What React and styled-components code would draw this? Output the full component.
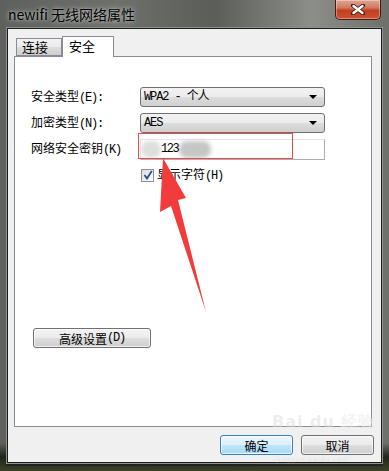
import styled, { createGlobalStyle } from "styled-components";

const Global = createGlobalStyle`
  html, body { margin: 0; padding: 0; }
  body {
    width: 389px;
    height: 471px;
    overflow: hidden;
    font-family: "Noto Sans CJK SC", "DejaVu Sans", sans-serif;
    font-size: 12px;
    color: #000;
  }
`;

const Frame = styled.div`
  width: 389px;
  height: 471px;
  display: flex;
  flex-direction: column;
  box-sizing: border-box;
  background:
    linear-gradient(180deg, rgba(0,0,0,0) 0%, rgba(0,0,0,0) 94%, rgba(20,24,16,0.85) 97%, #3c4226 100%),
    linear-gradient(90deg, #5d605c 0%, #6d706b 30%, #5a5d58 55%, #8c8e8a 80%, #6c6f6a 100%);
  position: relative;
`;

const TitleBar = styled.div`
  height: 28px;
  display: flex;
  align-items: flex-start;
  justify-content: space-between;
  padding: 0 8px 0 8px;
  box-sizing: border-box;
`;

const Title = styled.div`
  font-size: 14px;
  line-height: 15px;
  margin-top: 7px;
  color: #000;
  text-shadow: 0 0 6px rgba(255,255,255,0.55), 0 0 3px rgba(255,255,255,0.5);
`;

const CloseBtn = styled.div`
  width: 46px;
  height: 20px;
  box-sizing: border-box;
  border: 1px solid #4a1a12;
  border-top: none;
  border-radius: 0 0 5px 5px;
  background: linear-gradient(180deg, #e0a392 0%, #d27a63 40%, #c0401f 55%, #cc5232 100%);
  box-shadow: inset 0 0 0 1px rgba(255,255,255,0.35);
  display: flex;
  align-items: center;
  justify-content: center;
`;

const Client = styled.div`
  flex: 1;
  margin: 0 7px 8px 7px;
  background: #f0f0f0;
  border: 1px solid #1c1c1c;
  box-shadow: 0 0 0 1px #8e928c, 0 2px 0 1px #222;
  display: flex;
  flex-direction: column;
  padding: 7px 9px 7px 6px;
  box-sizing: border-box;
`;

const Tabs = styled.div`
  display: flex;
  align-items: flex-end;
  height: 20px;
  padding-left: 2px;
  position: relative;
  z-index: 1;
`;

const Tab = styled.div`
  box-sizing: border-box;
  height: ${(p) => (p.$active ? "21px" : "18px")};
  width: ${(p) => (p.$active ? "52px" : "46px")};
  padding: ${(p) => (p.$active ? "0 6px" : "0 5px")};
  border: 1px solid #898c95;
  border-bottom: ${(p) => (p.$active ? "none" : "1px solid #898c95")};
  margin-bottom: ${(p) => (p.$active ? "-1px" : "0")};
  background: ${(p) =>
    p.$active ? "#fff" : "linear-gradient(180deg, #f2f2f2 0%, #ebebeb 50%, #dddddd 51%, #cfcfcf 100%)"};
  font-size: 13px;
  line-height: ${(p) => (p.$active ? "18px" : "16px")};
`;

const Panel = styled.div`
  flex: 1;
  background: #fff;
  border: 1px solid #898c95;
  position: relative;
  display: flex;
  flex-direction: column;
  padding: 30px 0 0 16px;
  box-sizing: border-box;
`;

const FormGrid = styled.div`
  display: grid;
  grid-template-columns: 109px 185px;
  grid-auto-rows: 20px;
  row-gap: 6px;
  align-items: center;
`;

const Label = styled.div`
  font-size: 12px;
  line-height: 14px;
  white-space: nowrap;
`;

const Mnemonic = styled.span`
  font-family: "Liberation Mono", monospace;
  font-size: 12px;
  letter-spacing: -1.2px;
`;

const Select = styled.div`
  height: 20px;
  box-sizing: border-box;
  border: 1px solid #707070;
  border-radius: 3px;
  background: linear-gradient(180deg, #f2f2f2 0%, #ebebeb 50%, #dddddd 51%, #cfcfcf 100%);
  display: flex;
  align-items: center;
  justify-content: space-between;
  padding: 0 7px 0 3px;
`;

const SelectText = styled.span`
  font-family: "Liberation Mono", "Noto Sans CJK SC", monospace;
  font-size: 12px;
  letter-spacing: -1.1px;
  line-height: 14px;
`;

const Caret = styled.span`
  width: 0;
  height: 0;
  border-left: 4px solid transparent;
  border-right: 4px solid transparent;
  border-top: 4px solid #000;
`;

const TextBox = styled.div`
  height: 21px;
  box-sizing: border-box;
  border: 1px solid #abadb3;
  border-top-color: #e2e3ea;
  border-left-color: #e2e3ea;
  background: #fff;
  position: relative;
  display: flex;
  align-items: center;
  padding-left: 20px;
`;

const KeyText = styled.span`
  font-family: "Liberation Mono", monospace;
  font-size: 12px;
  letter-spacing: -1.4px;
  position: relative;
  z-index: 1;
`;

const Smudge = styled.div`
  position: absolute;
  top: 1px;
  height: 17px;
  border-radius: 8px;
  background: #c9c9c9;
  filter: blur(2px);
`;

const CheckRow = styled.div`
  grid-column: 2;
  display: flex;
  align-items: center;
  gap: 3px;
  padding-left: 1px;
`;

const Check = styled.div`
  width: 13px;
  height: 13px;
  box-sizing: border-box;
  border: 1px solid #8f8f8f;
  background: linear-gradient(135deg, #dcdcdc, #fdfdfd);
  display: flex;
  align-items: center;
  justify-content: center;
`;

const Button = styled.div`
  box-sizing: border-box;
  width: ${(p) => p.$w}px;
  height: 20px;
  border: 1px solid ${(p) => (p.$default ? "#3c7fb1" : "#707070")};
  border-radius: 3px;
  background: ${(p) =>
    p.$default
      ? "linear-gradient(180deg, #eaf6fd 0%, #d9f0fc 50%, #bee6fd 51%, #a7d9f5 100%)"
      : "linear-gradient(180deg, #f2f2f2 0%, #ebebeb 50%, #dddddd 51%, #cfcfcf 100%)"};
  box-shadow: inset 0 0 0 1px rgba(255, 255, 255, 0.7);
  display: flex;
  align-items: center;
  justify-content: center;
  font-size: 12px;
`;

const AdvancedWrap = styled.div`
  margin-top: auto;
  margin-bottom: 78px;
  padding-left: 2px;
`;

const Footer = styled.div`
  display: flex;
  justify-content: flex-end;
  gap: 8px;
  padding-top: 8px;
  margin-right: -2px;
`;

const Highlight = styled.div`
  position: absolute;
  left: 123px;
  top: 76px;
  width: 155px;
  height: 26px;
  box-sizing: border-box;
  border: 1px solid #f0474a;
  pointer-events: none;
  z-index: 2;
`;

const Arrow = styled.svg`
  position: absolute;
  left: 0;
  top: 0;
  z-index: 3;
  pointer-events: none;
`;

const Watermark = styled.div`
  position: absolute;
  left: 272px;
  top: 414px;
  color: rgba(200, 200, 200, 0.35);
  font-family: "DejaVu Sans", sans-serif;
  pointer-events: none;
  z-index: 4;
  line-height: 1;
`;

const WmBig = styled.div`
  font-size: 16px;
  font-weight: bold;
  letter-spacing: 1px;
  -webkit-text-stroke: 0.5px rgba(255, 255, 255, 0.4);
`;

const WmSmall = styled.div`
  font-size: 7px;
  margin-top: 27px;
  margin-left: 4px;
  letter-spacing: 0.5px;
`;

export default function App() {
  return (
    <>
      <Global />
      <Frame>
        <TitleBar>
          <Title>newifi 无线网络属性</Title>
          <CloseBtn>
            <svg width="14" height="11" viewBox="0 0 14 11">
              <path d="M2 1.5 L12 9.5 M12 1.5 L2 9.5" stroke="#3a1c14" strokeWidth="4" strokeLinecap="round" />
              <path d="M2.5 2 L11.5 9 M11.5 2 L2.5 9" stroke="#fff" strokeWidth="2.4" strokeLinecap="round" />
            </svg>
          </CloseBtn>
        </TitleBar>
        <Client>
          <Tabs>
            <Tab>连接</Tab>
            <Tab $active>安全</Tab>
          </Tabs>
          <Panel>
            <FormGrid>
              <Label>安全类型<Mnemonic>(E):</Mnemonic></Label>
              <Select>
                <SelectText>WPA2 - 个人</SelectText>
                <Caret />
              </Select>
              <Label>加密类型<Mnemonic>(N):</Mnemonic></Label>
              <Select>
                <SelectText>AES</SelectText>
                <Caret />
              </Select>
              <Label>网络安全密钥<Mnemonic>(K)</Mnemonic></Label>
              <TextBox>
                <Smudge style={{ left: 0, width: 20, background: "#dedede" }} />
                <Smudge style={{ left: 38, width: 32, background: "#c6c6c6" }} />
                <KeyText>123</KeyText>
              </TextBox>
              <CheckRow>
                <Check>
                  <svg width="10" height="10" viewBox="0 0 10 10">
                    <path d="M1.5 5 L4 8.5 L8.8 1" fill="none" stroke="#2c4a9a" strokeWidth="1.8" />
                  </svg>
                </Check>
                <Label>显示字符<Mnemonic>(H)</Mnemonic></Label>
              </CheckRow>
            </FormGrid>
            <AdvancedWrap>
              <Button $w={118}>高级设置<Mnemonic>(D)</Mnemonic></Button>
            </AdvancedWrap>
            <Highlight />
          </Panel>
          <Footer>
            <Button $w={73} $default>确定</Button>
            <Button $w={73}>取消</Button>
          </Footer>
        </Client>
        <Arrow width="389" height="471" viewBox="0 0 389 471">
          <polygon
            points="163,158 186,198 178,200 206,312 171,206 160,212"
            fill="#f23b3b"
          />
        </Arrow>
        <Watermark>
          <WmBig>Bai du 经验</WmBig>
          <WmSmall>jingyan.baidu.com</WmSmall>
        </Watermark>
      </Frame>
    </>
  );
}
